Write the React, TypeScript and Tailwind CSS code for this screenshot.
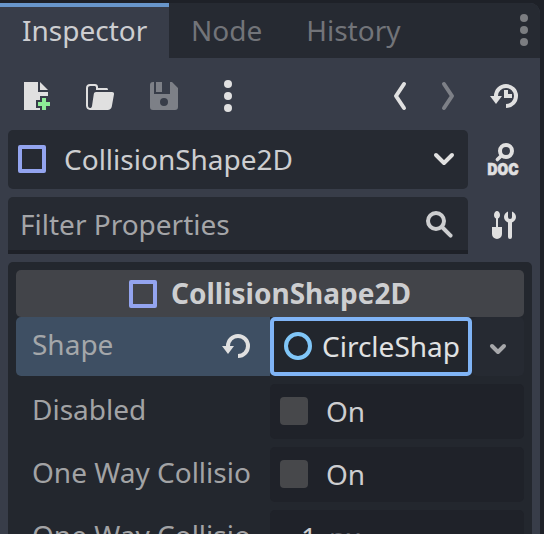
import React from 'react';

type IconProps = { className?: string; children: React.ReactNode };

function Icon({ className = '', children }: IconProps) {
  return (
    <svg width="32" height="32" viewBox="0 0 16 16" fill="none" className={`shrink-0 overflow-visible ${className}`}>
      {children}
    </svg>
  );
}

const INK = '#e0e0e0';

function NewIcon() {
  return (
    <Icon>
      <path fill={INK} d="M2 1v14h8v-1H8v-4h2V8h4V6H9V1zm8 0v4h4z" />
      <path fill="#8eef97" d="M11 9h2v2h2v2h-2v2h-2v-2H9v-2h2z" />
    </Icon>
  );
}

function FolderIcon() {
  return (
    <Icon className="ml-8">
      <path
        fill={INK}
        fillRule="evenodd"
        d="M3 2C1.8 2 1 2.8 1 4v8.8C1 14.200 1.800 15 3 15h8.800c1.100 0 1.900-.6 2.100-1.700l1.100-6.200c.1-.7-.3-1.100-1-1.100H6c-.6 0-1 .4-1.100 1L4 13c-.1.700-.5 1-1 1-.6 0-1-.5-1-1.200V4.200C2 3.400 2.400 3 3.200 3h2c.5 0 .8.300.8.800V5h6c0-.7-.3-1-.8-1H7v-.5C7 2.600 6.400 2 5.500 2z"
      />
    </Icon>
  );
}

function SaveIcon() {
  return (
    <Icon className="ml-8">
      <path
        fill="#7d8087"
        fillRule="evenodd"
        d="M2.500 1H3v6h8V1h1l3 3v9.500a1.500 1.500 0 0 1-1.500 1.500h-11A1.500 1.500 0 0 1 1 13.500v-11A1.500 1.500 0 0 1 2.500 1zM4 1h3v5H4zM8 9a2 2 0 0 0 0 4 2 2 0 0 0 0-4z"
      />
    </Icon>
  );
}

function Dots({ color, className }: { color: string; className?: string }) {
  return (
    <Icon className={className}>
      <circle cx="8" cy="2" r="2" fill={color} />
      <circle cx="8" cy="8" r="2" fill={color} />
      <circle cx="8" cy="14" r="2" fill={color} />
    </Icon>
  );
}

function Undo({ clock = false, className }: { clock?: boolean; className?: string }) {
  return (
    <Icon className={className}>
      <path stroke={INK} strokeWidth="2" d="M4 8.500V8a5 5 0 1 1 5 5" />
      <path fill={INK} d="M1 8h6l-3 4z" />
      {clock && <path fill={INK} d="M8 5h2v2h2v2H8z" />}
    </Icon>
  );
}

function DocIcon() {
  return (
    <Icon>
      <circle cx="9" cy="4" r="3" stroke={INK} strokeWidth="2" />
      <path stroke={INK} strokeWidth="1.800" strokeLinecap="round" d="M6.800 6.200 4.700 8.300" />
      <text
        x="-0.200"
        y="15.800"
        fill={INK}
        stroke={INK}
        strokeWidth="0.300"
        textLength="15.400"
        lengthAdjust="spacingAndGlyphs"
        className="font-['Inter',sans-serif] text-[7.700px] font-black"
      >
        DOC
      </text>
    </Icon>
  );
}

function ToolsIcon() {
  return (
    <Icon>
      <path fill={INK} d="M4.500 1C3.700 1 3 2.100 3 3c0 .8.400 1.500 1 1.800V9H2v3.500a2.500 2.500 0 0 0 5 0V9H5V4.800c.6-.3 1-1 1-1.800 0-.9-.7-2-1.500-2z" />
      <path fill={INK} d="M10 1.200A3.100 3.100 0 0 0 8 4c0 1.300.8 2.200 2 2.700V14a1 1 0 0 0 2 0V6.700c1.200-.5 2-1.400 2-2.700a3.100 3.100 0 0 0-2-2.800V4a1 1 0 0 1-2 0z" />
    </Icon>
  );
}

function Chevron({ d, color, className }: { d: string; color: string; className?: string }) {
  return (
    <Icon className={className}>
      <path d={d} stroke={color} strokeWidth="2" strokeLinecap="round" strokeLinejoin="round" />
    </Icon>
  );
}

function Square() {
  return <span className="size-7 shrink-0 rounded-[2px] border-4 border-[#93a4ef]" />;
}

function CheckField() {
  return (
    <div className="flex h-[55px] w-[254px] rounded-[5px] bg-[#1f2229] pl-[10px]">
      <span className="mt-[13px] size-7 rounded-[4px] bg-[#47484b]" />
      <span className="ml-[18px] mt-[8px] text-[#cdced0]">On</span>
    </div>
  );
}

function Row({ label, children }: { label: string; children: React.ReactNode }) {
  return (
    <div className="mt-2 flex">
      <div className="w-[254px] pl-4 pt-[6px] text-[#a2a3a5]">{label}</div>
      {children}
    </div>
  );
}

export default function App() {
  return (
    <div className="h-[534px] w-[544px] overflow-hidden whitespace-nowrap bg-[#1e2128] pr-1 pt-[3px] font-['Noto_Sans',sans-serif] text-[28px] leading-[38px]">
      <div className="h-[540px] overflow-hidden rounded-tr-[10px] bg-[#383d49]">
        <div className="flex h-[55px] bg-[#262a32] text-[#727479]">
          <div className="w-[169px] border-t-4 border-[#6896cb] bg-[#383d49] pl-[22px] pt-1 text-[#cdced1]">Inspector</div>
          <div className="pl-[22px] pt-2">Node</div>
          <div className="pl-11 pt-2">History</div>
          <Dots color="#7b7d81" className="ml-auto mt-[11px]" />
        </div>

        <div className="flex h-[72px] pl-5 pr-5 pt-[22px]">
          <NewIcon />
          <FolderIcon />
          <SaveIcon />
          <Dots color={INK} className="ml-8" />
          <Chevron d="M10 2 6 8l4 6" color={INK} className="ml-auto" />
          <Chevron d="m6 2 4 6-4 6" color="#7d8087" className="ml-4" />
          <Undo clock className="ml-6" />
        </div>

        <div className="flex h-[59px]">
          <div className="ml-2 flex w-[460px] rounded-[5px] bg-[#262a32] pl-[10px] pr-2 text-[#cdced0]">
            <span className="flex pt-[15px]"><Square /></span>
            <span className="ml-[18px] mt-[10px]">CollisionShape2D</span>
            <Chevron d="m4 6 4 4 4-4" color={INK} className="ml-auto mt-[13px]" />
          </div>
          <div className="ml-5 pt-[13px]"><DocIcon /></div>
        </div>

        <div className="mt-2 flex h-[57px]">
          <div className="ml-2 flex w-[460px] rounded-t-[5px] border-b-4 border-[#1e2128] bg-[#262a32] pl-3 pr-3">
            <span className="mt-2 text-[#a4a5a8]">Filter Properties</span>
            <Icon className="ml-auto mt-3">
              <circle cx="6" cy="6" r="4" stroke="#cdced0" strokeWidth="2" />
              <path d="m9 9 4.300 4.300" stroke="#cdced0" strokeWidth="2" strokeLinecap="round" />
            </Icon>
          </div>
          <div className="ml-5 pt-3"><ToolsIcon /></div>
        </div>

        <div className="ml-2 mt-2 h-[290px] w-[524px] rounded-t-[5px] bg-[#23272e] px-2 pt-2">
          <div className="flex h-[47px] rounded-[5px] bg-[#424449] pl-[113px] text-[#cdced0]">
            <span className="flex pt-[10px]"><Square /></span>
            <span className="ml-[14px] mt-1 font-bold">CollisionShape2D</span>
          </div>
          <div className="flex h-[59px]">
            <div className="flex w-[254px] rounded-l-[5px] bg-[#3e4f63] pl-4 text-[#a4a7aa]">
              <span className="mt-2">Shape</span>
              <Undo className="ml-auto mr-[18px] mt-[13px]" />
            </div>
            <div className="flex w-[202px] rounded-[5px] border-4 border-[#80b4f6] bg-[#22262d] pl-[10px] text-[#e0e1e2]">
              <span className="mt-[11px] size-7 shrink-0 rounded-full border-4 border-[#80c6f8]" />
              <span className="ml-[10px] mt-[6px]">CircleShap</span>
            </div>
            <div className="w-[52px] rounded-[5px] bg-[#262a32] pl-[10px] pt-[16px]">
              <Chevron d="m5 6.500 3 3 3-3" color="#a7a8ab" />
            </div>
          </div>
          <Row label="Disabled"><CheckField /></Row>
          <Row label="One Way Collisio"><CheckField /></Row>
          <Row label="One Way Collisio">
            <div className="flex h-[55px] w-[254px] rounded-[5px] bg-[#1f2229] pl-[31px] pt-2">
              <span className="text-[#cdced0]">1</span>
              <span className="ml-[12px] text-[#616369]">px</span>
            </div>
          </Row>
        </div>
      </div>
    </div>
  );
}
